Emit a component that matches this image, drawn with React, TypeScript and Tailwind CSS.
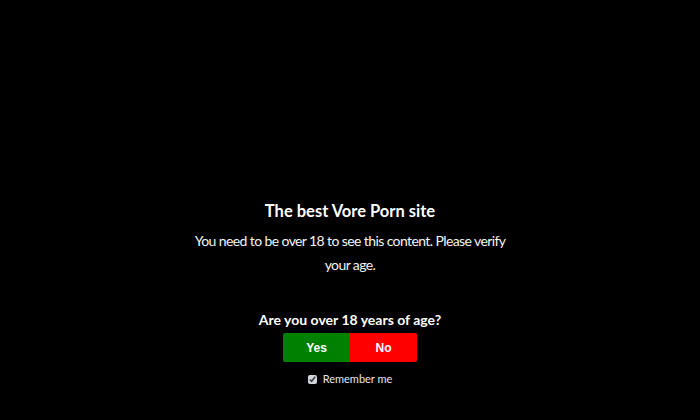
import { useState } from "react";

export default function App() {
  const [remember, setRemember] = useState(true);

  return (
    <div className="w-[700px] h-[420px] bg-black text-white flex flex-col items-center font-['Lato',_sans-serif]">
      <h1 className="mt-[199px] text-[16.5px] leading-6 font-bold">The best Vore Porn site</h1>
      <p className="mt-[6px] w-[330px] text-center text-[14px] leading-[24px] tracking-[-0.6px] text-gray-100">
        You need to be over 18 to see this content. Please verify your age.
      </p>
      <h2 className="mt-[33px] text-[14px] leading-5 font-bold">Are you over 18 years of age?</h2>
      <div className="mt-[3px] flex">
        <button className="w-[67px] h-[29px] bg-[#008000] rounded-l-[2px] text-[12px] font-bold font-['Liberation_Sans',_sans-serif]">
          Yes
        </button>
        <button className="w-[67px] h-[29px] bg-[#ff0000] rounded-r-[2px] text-[12px] font-bold font-['Liberation_Sans',_sans-serif]">
          No
        </button>
      </div>
      <label className="mt-[9px] flex items-center gap-[6px] text-[11px] text-gray-200">
        <input
          type="checkbox"
          checked={remember}
          onChange={(e) => setRemember(e.target.checked)}
          className="w-[9px] h-[9px] accent-gray-300"
        />
        Remember me
      </label>
    </div>
  );
}
